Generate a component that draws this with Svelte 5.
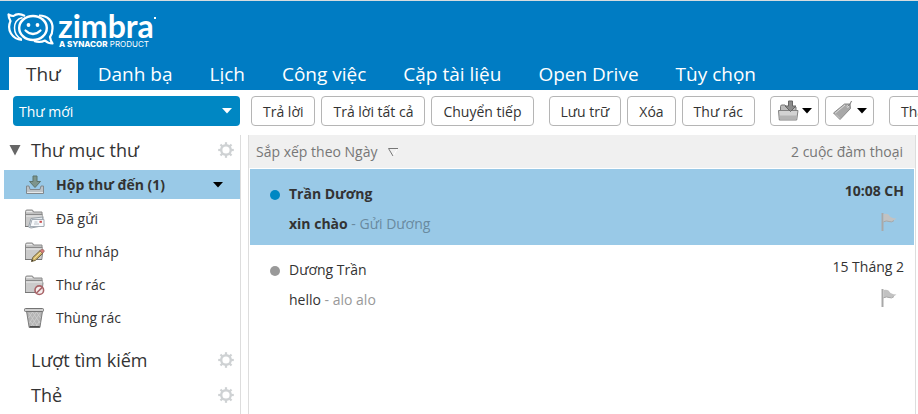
<script>
  const tabs = ['Thư', 'Danh bạ', 'Lịch', 'Công việc', 'Cặp tài liệu', 'Open Drive', 'Tùy chọn'];
  const groups = [
    ['Trả lời', 'Trả lời tất cả', 'Chuyển tiếp'],
    ['Lưu trữ', 'Xóa', 'Thư rác']
  ];
  const folders = [
    { name: 'Đã gửi', icon: 'sent' },
    { name: 'Thư nháp', icon: 'draft' },
    { name: 'Thư rác', icon: 'junk' },
    { name: 'Thùng rác', icon: 'trash' }
  ];
  const mails = [
    { from: 'Trần Dương', subject: 'xin chào', text: 'Gửi Dương', date: '10:08 CH', unread: true },
    { from: 'Dương Trần', subject: 'hello', text: 'alo alo', date: '15 Tháng 2', unread: false }
  ];
  const teeth = [0, 45, 90, 135, 180, 225, 270, 315];
</script>

{#snippet caret()}
  <svg class="caret" width="10" height="6" viewBox="0 0 10 6" aria-hidden="true"><path d="M0 0h10L5 5.600z" fill="currentColor" /></svg>
{/snippet}

{#snippet gear(label)}
  <button class="gear" aria-label={label}>
    <svg width="16" height="16" viewBox="0 0 16 16">
      <circle cx="8" cy="8" r="4.800" fill="none" stroke="#cfd2d4" stroke-width="2.400" />
      {#each teeth as a}
        <rect x="6.900" y="0.200" width="2.200" height="3" fill="#cfd2d4" transform="rotate({a} 8 8)" />
      {/each}
    </svg>
  </button>
{/snippet}

{#snippet folderIcon(kind)}
  <svg width="22" height="22" viewBox="0 0 22 22" aria-hidden="true">
    {#if kind === 'trash'}
      <path d="M2.500 4h16l-2.600 16.500H5.200z" fill="#b4b4b4" stroke="#7c7c7c" />
      <path d="M5 6l9 14M8.500 5l7.500 11M12.500 5l4 6M16 6L6.500 20M12.500 5L5.500 16M8.500 5L4.500 11M15.500 14l-4 6M6 14l5 6" stroke="#cfcfcf" stroke-width="0.800" />
      <path d="M5.600 19.700h10.100" stroke="#4c4c4c" stroke-width="1.400" />
      <rect x="0.500" y="1.500" width="19" height="3" rx="1" fill="#d0d0d0" stroke="#747474" />
    {:else}
      <path d="M1.500 18.500V3.500q0-1.500 1.500-1.500h5q1.200 0 1.500 2h8.500v3l1 2-1.200 9.500z" fill="#cbcbcb" stroke="#8a8a8a" />
      <path d="M2 6.500h16.500" stroke="#8a8a8a" stroke-width="1.300" />
      <path d="M2 8h16.500M2.500 3.500h5.500" stroke="#ececec" />
      <path d="M1 18.500h17" stroke="#777" />
      {#if kind === 'sent'}
        <path d="M7 10.500l11.500-1.500 1.500 8.500-13 2.500-2.500-1z" fill="#e4e9ee" stroke="#9aa3aa" />
        <path d="M8 11.500h12v7H6z" fill="#f8fafc" stroke="#a3abb3" />
        <path d="M10 16h5M10.500 14h3" stroke="#b7bec6" />
        <rect x="15.500" y="12.800" width="2.400" height="2" fill="#c84d4d" />
      {:else if kind === 'draft'}
        <path d="M7.500 20.500l1.200-4 7.500-7 2.800 2.600-7.600 7.300z" fill="#d1b56a" stroke="#6f633f" />
        <path d="M10 17.800l7.200-6.900" stroke="#f4e2a0" />
        <path d="M15.800 9.900l1.600-1.600q1.500-.6 2.700 1.300v1l-1.500 1.700z" fill="#d97d78" stroke="#8d6361" stroke-width="0.700" />
        <path d="M7.500 20.500l.5-1.800 1.200 1.100z" fill="#222" />
      {:else}
        <circle cx="15.300" cy="16.200" r="4.300" fill="#f5eeee" stroke="#a86468" stroke-width="1.600" />
        <path d="M12.500 19l5.700-5.600" stroke="#a86468" stroke-width="1.600" />
      {/if}
    {/if}
  </svg>
{/snippet}

<div class="app">
  <header>
    <a class="logo" href="#home" aria-label="Zimbra">
      <svg width="50" height="36" viewBox="0 0 50 36" aria-hidden="true">
        <path d="M18 3C13 .5 9 1 6.500 3 4.500 3 3 2.500 1.500 1.500 1.500 4 2.300 6 3.500 8-.5 17 5 26 15 27" fill="none" stroke="#fff" stroke-width="2.200" stroke-linejoin="round" />
        <path d="M15.500 4.500C10 6 7.500 10 7.500 15c0 5 2.500 9 7 11" fill="none" stroke="#fff" stroke-width="1.500" />
        <path d="M32 2.500c9 0 14 6 13.500 13 0 4-1 6.500-2.500 8.500.3 2.500 1 4.500 2.500 6.500-3 0-5.500-1-7.500-3-3 1.500-8 1.500-11 .5" fill="none" stroke="#fff" stroke-width="2.200" stroke-linejoin="round" />
        <ellipse cx="26" cy="15" rx="13.800" ry="12" fill="none" stroke="#fff" stroke-width="2.400" />
        <circle cx="21.500" cy="12" r="1.900" fill="#fff" /><circle cx="30.500" cy="12" r="1.900" fill="#fff" />
        <path d="M18.500 17.500q7.500 7 15 0" fill="none" stroke="#fff" stroke-width="2.200" stroke-linecap="round" />
      </svg>
      <span class="words">
        <span class="brand">zimbra<i></i></span>
        <span class="tagline"><b>A SYNACOR</b> PRODUCT</span>
      </span>
    </a>
    <nav>
      {#each tabs as tab, i}
        <a href="#tab{i}" class:active={i === 0}>{tab}</a>
      {/each}
    </nav>
  </header>

  <div class="toolbar">
    <div class="compose"><button>Thư mới {@render caret()}</button></div>
    <div class="tools">
      {#each groups as group}
        <div class="group">
          {#each group as label}<button class="tool">{label}</button>{/each}
        </div>
      {/each}
      <div class="group">
        <button class="tool menu" aria-label="Di chuyển">
          <svg width="22" height="22" viewBox="0 0 22 22">
            <path d="M3.500 10V6.500q0-1.500 1.500-1.500h3l1.500 2h9.500v4" fill="#bcbcbc" stroke="#777" />
            <path d="M1.500 10.500h19.500l-1.300 9.500H2.300z" fill="#d2d2d2" stroke="#808080" />
            <path d="M2.500 15.500h17.300l-.5 4H3z" fill="#b3b3b3" />
            <path d="M11.500 1h4v5h3.500l-5.500 5.500-5.500-5.500h3.500z" fill="#8c8c8c" stroke="#666" />
          </svg>
          {@render caret()}
        </button>
        <button class="tool menu" aria-label="Gắn thẻ">
          <svg width="22" height="22" viewBox="0 0 22 22">
            <path d="M1.500 13L12.500 4l5.500 0 .5 4.500-10.500 11z" fill="#a8a8a8" stroke="#8a8a8a" />
            <path d="M3 13.300l10-8.300" stroke="#ddd" />
            <path d="M4 14.500l4 4" stroke="#c9c9c9" />
            <circle cx="15.800" cy="6.500" r="1.100" fill="#fff" />
            <path d="M15.500 6.500Q18 5.500 19.500 1" fill="none" stroke="#777" />
          </svg>
          {@render caret()}
        </button>
      </div>
      <div class="group"><button class="tool">Thao tác</button></div>
    </div>
  </div>

  <div class="body">
    <aside>
      <div class="section">
        <svg class="fold" width="12" height="12" viewBox="0 0 12 12" aria-hidden="true"><path d="M0.500 1h11L6 11.500z" fill="#666" /></svg>
        <h2>Thư mục thư</h2>
        {@render gear('Tùy chọn thư mục')}
      </div>
      <a class="folder selected" href="#inbox">
        <svg width="22" height="22" viewBox="0 0 22 22" aria-hidden="true">
          <path d="M2.500 12v7.500h17V12h-2.500l-1 3.500H6L5 12z" fill="#bcc2c6" stroke="#80888d" />
          <path d="M3 18.500h16" stroke="#e5e8ea" />
          <path d="M9 2h4v5.500h3.500L11 13.500 5.500 7.500H9z" fill="#7d958c" stroke="#5d746c" />
        </svg>
        <span>Hộp thư đến (1)</span>
        {@render caret()}
      </a>
      {#each folders as f}
        <a class="folder" href="#{f.icon}">{@render folderIcon(f.icon)}<span>{f.name}</span></a>
      {/each}
      <div class="section searches"><h2>Lượt tìm kiếm</h2>{@render gear('Tùy chọn tìm kiếm')}</div>
      <div class="section tags"><h2>Thẻ</h2>{@render gear('Tùy chọn thẻ')}</div>
    </aside>

    <main>
      <div class="sort">
        <button>Sắp xếp theo Ngày
          <svg width="12" height="10" viewBox="0 0 12 10" aria-hidden="true"><path d="M10.500 1.500L6 9" stroke="#fff" fill="none" /><path d="M11 1.500H1.500L6 9" stroke="#777" fill="none" /></svg>
        </button>
        <span>2 cuộc đàm thoại</span>
      </div>
      {#each mails as m}
        <article class:unread={m.unread}>
          <span class="dot"></span>
          <div class="text">
            <div class="from">{m.from}</div>
            <div class="line"><span class="subject">{m.subject}</span><span class="snippet">{' - ' + m.text}</span></div>
          </div>
          <div class="meta">
            <time>{m.date}</time>
            <button aria-label="Gắn cờ">
              <svg width="18" height="20" viewBox="0 0 18 20">
                <path d="M2.500 1v18" stroke="#a8a8a8" stroke-width="2" />
                <path d="M3.500 2q3-.8 5 .5l2 2.500q3 1.500 6 1.500l-2.500 1.800q-2.500 2.300-5 1.200t-5.500.5z" fill="#c2c2c2" />
                <path d="M3.500 9.800q3-1.500 5.500-.3t5-.9" stroke="#a6a6a6" fill="none" />
              </svg>
            </button>
          </div>
        </article>
      {/each}
    </main>
  </div>
</div>

<style>
  :global(body) { margin: 0; background: #fff; }
  .app {
    font-family: "Open Sans", "Noto Sans", sans-serif;
    font-size: 14px;
    color: #333;
    height: 100vh;
    display: flex;
    flex-direction: column;
    overflow: hidden;
  }
  button {
    font: inherit;
    color: inherit;
    margin: 0;
    padding: 0;
    border: 0;
    background: none;
    cursor: pointer;
    white-space: nowrap;
  }
  a { color: inherit; text-decoration: none; }
  svg { display: block; flex: none; }

  header { background: #007cc3; border-top: 1px solid #d5dcdf; color: #fff; flex: none; }
  .logo { display: flex; height: 44px; padding: 12px 0 0 7px; box-sizing: content-box; }
  .words { display: flex; flex-direction: column; padding-left: 1px; }
  .brand { font: 700 32px/26px Lato, sans-serif; display: flex; }
  .brand i { width: 2px; height: 2px; margin-top: 4px; background: #fff; }
  .tagline { font: 8px/10px Inter, sans-serif; padding-left: 1px; }
  .tagline b { font-weight: 800; }
  nav { display: flex; gap: 3px; padding-left: 9px; }
  nav a { padding: 0 17px; font-size: 19px; line-height: 34px; height: 33px; white-space: nowrap; }
  nav a.active { background: #fff; color: #333; }

  .toolbar { display: flex; padding: 6px 0 9px; flex: none; }
  .compose { width: 227px; padding: 0 11px 0 13px; flex: none; }
  .compose button {
    display: flex;
    align-items: center;
    justify-content: space-between;
    width: 100%;
    height: 30px;
    padding: 0 8px 0 6px;
    border-radius: 4px;
    background: #0087c3;
    color: #fff;
  }
  .tools { display: flex; gap: 15px; }
  .group { display: flex; gap: 6px; }
  .tool {
    height: 30px;
    padding: 0 11px;
    box-sizing: border-box;
    border: 1px solid #b5b5b5;
    border-radius: 4px;
    background: #fff;
  }
  .tool.menu { display: flex; align-items: center; gap: 3px; padding: 0 6px; color: #000; }

  .body { display: flex; flex: 1; min-height: 0; }
  aside { width: 240px; flex: none; border-right: 1px solid #ddd; }
  .section { display: flex; align-items: center; height: 35px; padding: 0 6px 0 9px; box-sizing: border-box; }
  .section:first-child { padding-bottom: 5px; }
  .section h2 { flex: 1; margin: 0; padding-left: 10px; font-size: 18px; font-weight: 400; line-height: 28px; }
  .searches, .tags { padding-left: 21px; }
  .searches { margin-top: 8px; }
  .folder { display: flex; align-items: center; height: 33px; padding-left: 24px; }
  .folder span { flex: 1; padding-left: 10px; }
  .folder.selected { height: 29px; margin: 0 0 3px 4px; padding: 0 17px 0 20px; background: #99c9e7; font-weight: 700; }
  .folder.selected .caret { color: #000; }

  main { flex: 1; min-width: 0; margin: 0 2px 0 7px; border: solid #ddd; border-width: 0 1px; }
  .sort { display: flex; align-items: center; justify-content: space-between; height: 33px; padding: 0 12px 0 7px; margin-bottom: 1px; background: #f0f0f0; color: #777; }
  .sort button { display: flex; align-items: center; gap: 10px; }
  article { display: flex; height: 76px; margin: 0 1px; padding: 10px 10px 0 20px; box-sizing: border-box; }
  article.unread { background: #99c9e7; }
  .dot { width: 10px; height: 10px; margin-top: 11px; border-radius: 50%; background: #999; flex: none; }
  .unread .dot { background: #0087c3; }
  .text { flex: 1; padding-left: 9px; line-height: 30px; }
  .snippet { color: #999; white-space: pre; }
  .unread .snippet { color: #698a9f; }
  .unread .from, .unread .subject, .unread time { font-weight: 700; }
  .meta { display: flex; flex-direction: column; align-items: flex-end; }
  .meta time { line-height: 24px; }
  .meta button { margin: 9px 6px 0 0; }
</style>
